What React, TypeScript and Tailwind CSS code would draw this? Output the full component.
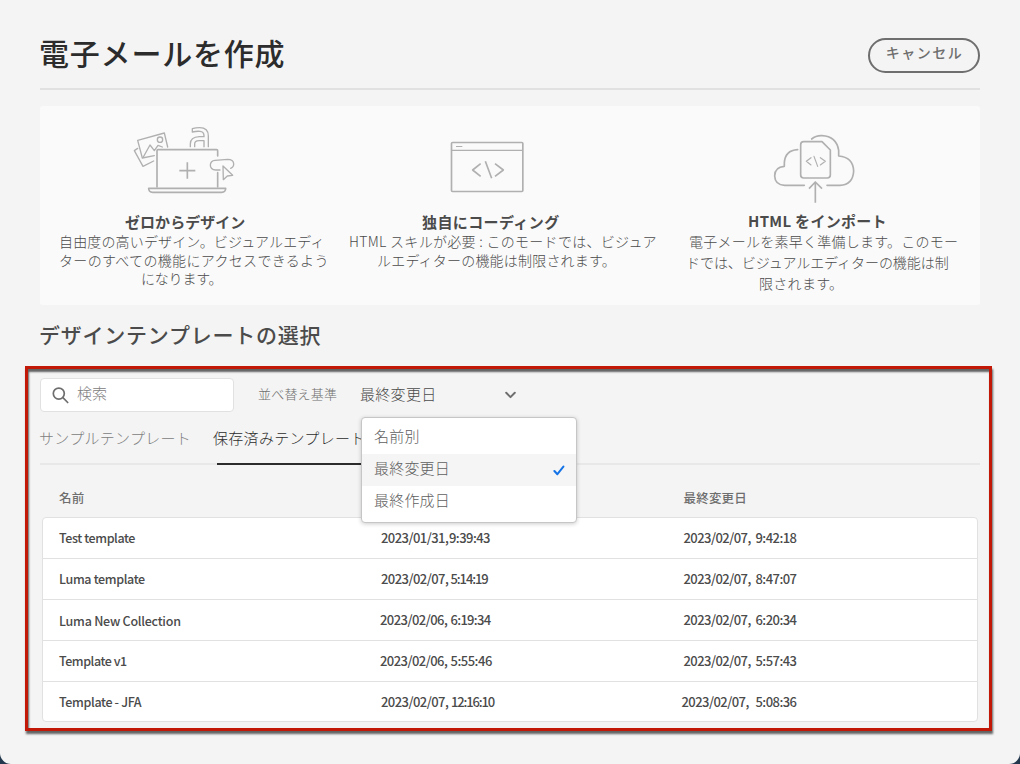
import type { ReactNode } from 'react';

type Row = {
  name: string;
  nameClass: string;
  created: [string, string];
  createdClass: string;
  createdDateClass: string;
  createdTimeClass: string;
  modified: [string, string];
  modifiedClass: string;
};

const rows: Row[] = [
  {
    name: 'Test template',
    nameClass: 'tracking-[-0.4px]',
    created: ['2023/01/31,', '9:39:43'],
    createdClass: 'w-[302.5px] pl-0',
    createdDateClass: 'w-[68px]',
    createdTimeClass: 'tracking-[-0.55px]',
    modified: ['2023/02/07,', '9:42:18'],
    modifiedClass: 'pl-0',
  },
  {
    name: 'Luma template',
    nameClass: 'tracking-[-0.35px]',
    created: ['2023/02/07,', '5:14:19'],
    createdClass: 'w-[302.5px] pl-0',
    createdDateClass: 'w-[69.5px]',
    createdTimeClass: 'tracking-[-1.1px]',
    modified: ['2023/02/07,', '8:47:07'],
    modifiedClass: 'pl-0',
  },
  {
    name: 'Luma New Collection',
    nameClass: 'pt-[2px] tracking-[-0.25px]',
    created: ['2023/02/06,', '6:19:34'],
    createdClass: 'w-[303.5px] -ml-px',
    createdDateClass: 'w-[70.5px]',
    createdTimeClass: 'tracking-[-0.7px]',
    modified: ['2023/02/07,', '6:20:34'],
    modifiedClass: 'pl-0',
  },
  {
    name: 'Template v1',
    nameClass: 'tracking-[-0.45px]',
    created: ['2023/02/06,', '5:55:46'],
    createdClass: 'w-[303.5px] -ml-px',
    createdDateClass: 'w-[70.5px]',
    createdTimeClass: 'tracking-[-0.5px]',
    modified: ['2023/02/07,', '5:57:43'],
    modifiedClass: 'pl-0',
  },
  {
    name: 'Template - JFA',
    nameClass: 'tracking-[-0.35px]',
    created: ['2023/02/07,', '12:16:10'],
    createdClass: 'w-[302.5px] pl-0',
    createdDateClass: 'w-[70px]',
    createdTimeClass: 'tracking-[-1.15px]',
    modified: ['2023/02/07,', '5:08:36'],
    modifiedClass: '-ml-[2px] gap-[2px]',
  },
];

function Line({ className, children }: { className: string; children: ReactNode }) {
  return <div className={'flex items-center whitespace-pre leading-none ' + className}>{children}</div>;
}

function DesignIcon() {
  return (
    <svg width="120" height="85" viewBox="0 0 360 255" fill="none" stroke="#b0b0b0" strokeWidth="4" strokeLinejoin="round" strokeLinecap="round">
      <path d="M96 207V98q0-3 3-3H275q3 0 3 3V114M278 164V207" strokeWidth="5" />
      <path d="M71 211H302Q302 223 290 223H83Q71 223 71 211Z" strokeWidth="5" />
      <path d="M187 133V182M163 158H211" strokeWidth="5" strokeLinecap="butt" />
      <path d="M88 113L52 120L38 67L118 45L128 87" />
      <path d="M55 117L75 81L88 98L99 82L112 87" />
      <circle cx="105" cy="65" r="8" />
      <path d="M38 91L28 98L54 145L86 129" />
      <path d="M202 42V32Q212 29 224 29Q250 29 250 54V86M202 42Q215 39 225 40Q237 41 237 53V56H223Q196 57 196 78V86M209 86V78Q209 68 222 68H237V86" />
      <path d="M285 156H272Q256 155 256 141Q257 128 270 127L308 124Q325 124 326 137Q327 147 317 151" />
      <path d="M294 144L323 172L307 174L295 185Z" fill="#fafafa" />
    </svg>
  );
}

function CodeIcon() {
  return (
    <svg width="75" height="53" viewBox="0 0 225 159" fill="none" stroke="#b0b0b0" strokeWidth="4" strokeLinejoin="round">
      <rect x="4.5" y="7.5" width="214" height="147" rx="3" strokeWidth="5" />
      <path d="M5 31H218M18 19.5H37" strokeWidth="3.5" />
      <path d="M92 71L68 90L92 109M106 64L125 115M135 71L160 90L135 109" strokeWidth="5" />
    </svg>
  );
}

function ImportIcon() {
  return (
    <svg width="90" height="75" viewBox="0 0 270 225" fill="none" stroke="#b0b0b0" strokeWidth="5" strokeLinejoin="round" strokeLinecap="round">
      <path d="M83 59Q45 61 43 99V109Q14 111 14 138Q15 165 44 166H103" />
      <path d="M125 27Q138 16 156 17Q199 19 206 61V78Q249 81 251 123Q249 164 210 166H171" />
      <path d="M101 35H156L181 60V135Q181 144 172 144H101Q92 144 92 135V44Q92 35 101 35Z" />
      <path d="M123 83L109 94L123 105M132 79L143 109M151 83L166 94L151 105" strokeWidth="3.5" />
      <path d="M136 218V156M117 176L136 156L156 176" strokeLinecap="butt" />
    </svg>
  );
}

export default function App() {
  return (
    <div className="h-[764px] w-[1020px] overflow-hidden bg-[#24384d] font-['Noto_Sans_CJK_JP','Noto_Sans',sans-serif] font-light text-[#4b4b4b]">
      <main className="flex h-[764px] flex-col rounded-b-[11px] bg-[#f4f4f4]">
        <header className="mx-10 flex h-[90px] shrink-0 items-start justify-between border-b-2 border-[#e1e1e1]">
          <h1 className="-ml-px pt-[37px] text-[30px] leading-[30px] font-medium tracking-[0.8px] whitespace-nowrap text-[#2c2c2c]">電子メールを作成</h1>
          <button className="mt-[38px] flex h-[35px] w-28 justify-center rounded-full border-2 border-[#6e6e6e] pt-[4px] pl-px text-sm leading-[16px] font-medium tracking-[1.5px] text-[#6e6e6e]">キャンセル</button>
        </header>

        <section className="mx-10 mt-4 flex h-[199px] shrink-0 rounded-[3px] bg-[#fafafa] text-sm">
          <article className="w-[300px]">
            <div className="ml-[85px] h-[105px] pt-3"><DesignIcon /></div>
            <Line className="h-[20px] pl-[85px] text-[15px] font-bold tracking-[0.05px]">ゼロからデザイン</Line>
            <Line className="h-[20px] pl-[19px] tracking-[0.15px]">自由度の高いデザイン。ビジュアルエディ</Line>
            <Line className="h-[18px] pl-[19px] tracking-[0.33px]">ターのすべての機能にアクセスできるよう</Line>
            <Line className="h-[18px] pl-[101px] tracking-[-0.2px]">になります。</Line>
          </article>
          <article className="w-[330px]">
            <div className="ml-[110px] h-[105px] pt-[34px]"><CodeIcon /></div>
            <Line className="h-[20px] pl-[82px] text-[15px] font-bold tracking-[0.4px]">独自にコーディング</Line>
            <Line className="h-[20px] pl-[9px] tracking-[0.3px]">HTML スキルが必要 : このモードでは、ビジュア</Line>
            <Line className="h-[18px] pl-[37px] tracking-[0.2px]">ルエディターの機能は制限されます。</Line>
          </article>
          <article className="w-[310px]">
            <div className="ml-[100px] h-[104px] pt-6"><ImportIcon /></div>
            <Line className="h-[20px] pl-[78px] text-[15px] font-bold tracking-[0.3px]">HTML をインポート</Line>
            <Line className="h-[21px] pl-[19px] tracking-[0.25px]">電子メールを素早く準備します。このモー</Line>
            <Line className="h-[21px] pl-[16px] tracking-[-0.05px]">ドでは、ビジュアルエディターの機能は制</Line>
            <Line className="h-[21px] pl-[89px] tracking-[0.3px]">限されます。</Line>
          </article>
        </section>

        <h2 className="ml-[39px] flex h-[61px] shrink-0 items-center pb-[2px] text-[21px] leading-none font-medium tracking-[0.77px]">デザインテンプレートの選択</h2>

        <section className="relative ml-[25px] h-[365px] w-[967px] shrink-0 border-[3px] border-[#c11807] shadow-[1px_3px_2px_rgba(0,0,0,0.6),inset_1px_3px_2px_rgba(0,0,0,0.6)]">
          <div className="flex h-[51px] items-center pl-3">
            <div className="mt-px flex h-[34px] w-[194px] items-center rounded-[4px] border border-[#e1e1e1] bg-white">
              <svg className="ml-[11px]" width="17" height="17" viewBox="0 0 17 17" fill="none" stroke="#6e6e6e" strokeWidth="1.7">
                <circle cx="6.8" cy="6.6" r="5.5" />
                <path d="M10.9 10.7L15.7 15.5" strokeLinecap="round" />
              </svg>
              <span className="ml-2 pb-[5px] text-[15px] leading-none text-[#808080]">検索</span>
            </div>
            <span className="ml-6 w-[102px] pb-[2px] text-[13px] leading-none tracking-[0.2px] whitespace-nowrap text-[#6e6e6e]">並べ替え基準</span>
            <span className="w-[145px] pb-[2px] text-[15px] leading-none tracking-[0.3px] whitespace-nowrap">最終変更日</span>
            <svg width="11" height="8" viewBox="0 0 11 8" fill="none" stroke="#6e6e6e" strokeWidth="2" strokeLinecap="round" strokeLinejoin="round">
              <path d="M1.2 1.8L5.5 6.1L9.8 1.8" />
            </svg>
          </div>

          <nav className="mr-[9px] ml-3 flex h-[45px] border-b-2 border-[#e8e8e8] text-[15px] leading-none tracking-[0.3px]">
            <div className="w-[174px] -ml-px pt-[10px] whitespace-nowrap text-[#808080]">サンプルテンプレート</div>
            <div className="pt-[10px] text-[#2c2c2c]">
              <div className="h-[33px] whitespace-nowrap">保存済みテンプレート</div>
              <div className="ml-1 h-[2px] w-[160px] bg-[#2c2c2c]" />
            </div>
          </nav>

          <div className="flex h-[52px] pt-[27px] pl-[31px] text-[12.5px] leading-none font-medium tracking-[0.2px] text-[#6e6e6e]">
            <div className="w-[624.5px]">名前</div>
            <div>最終変更日</div>
          </div>

          <div className="mr-[11px] ml-[14px] flex h-[205px] flex-col rounded-[4px] border border-[#e1e1e1] bg-white text-[13px] leading-none font-medium tracking-[-0.55px]">
            {rows.map((row) => (
              <div key={row.name} className="flex h-[41px] shrink-0 items-center border-b border-[#e1e1e1] pl-4 last:h-[40px] last:border-b-0">
                <div className={'w-[322px] text-[12.5px] ' + row.nameClass}>{row.name}</div>
                <div className={'flex pb-px ' + row.createdClass}>
                  <span className={row.createdDateClass}>{row.created[0]}</span>
                  <span className={row.createdTimeClass}>{row.created[1]}</span>
                </div>
                <div className={'flex pb-px ' + row.modifiedClass}>
                  <span className="w-[72px]">{row.modified[0]}</span>
                  <span>{row.modified[1]}</span>
                </div>
              </div>
            ))}
          </div>

          <ul className="absolute top-[48px] left-[333px] h-[106px] w-[216px] rounded-[4px] border border-[#c6c6c6] bg-white text-[15px] leading-none tracking-[0.2px] text-[#606060] shadow-[0_1px_4px_rgba(0,0,0,0.2)]">
            <li className="flex h-9 items-center pb-px pl-3">名前別</li>
            <li className="flex h-8 items-center justify-between bg-[#f5f5f5] pr-[11px] pl-3">
              <span className="pb-[5px]">最終変更日</span>
              <svg width="12" height="11" viewBox="0 0 12 11" fill="none" stroke="#1473e6" strokeWidth="2" strokeLinecap="round" strokeLinejoin="round">
                <path d="M1.4 6L4.4 9.2L10.4 1.6" />
              </svg>
            </li>
            <li className="flex h-[30px] items-center pb-[4px] pl-3">最終作成日</li>
          </ul>
        </section>
      </main>
    </div>
  );
}
